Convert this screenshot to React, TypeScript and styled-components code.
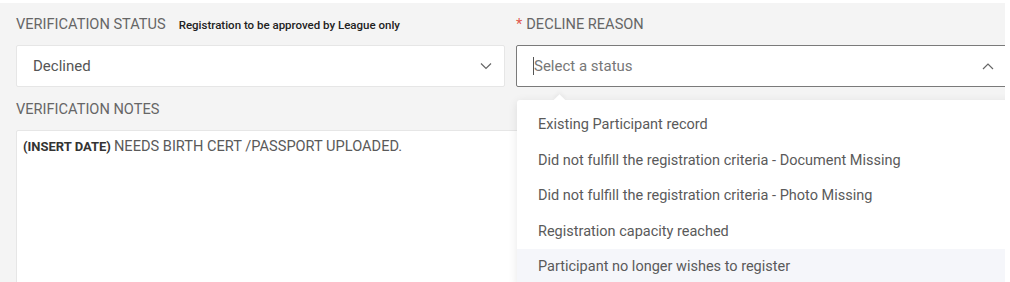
import styled, { createGlobalStyle } from "styled-components";

const GlobalStyle = createGlobalStyle`
  html, body {
    margin: 0;
    padding: 0;
    background: #ffffff;
    font-family: Roboto, "Liberation Sans", Arial, sans-serif;
  }
`

const Frame = styled.div`
  width: 1005px;
  height: 282px;
  padding-top: 3px;
  box-sizing: border-box;
  overflow: hidden;
`

const Panel = styled.div`
  position: relative;
  background: #f4f4f4;
  width: 1040px;
  height: 320px;
  padding: 0 0 0 16px;
  display: grid;
  grid-template-columns: 489px 491px;
  column-gap: 11px;
  grid-template-rows: 42px 42px 43px 1fr;
  align-items: center;
`

const Label = styled.div`
  display: flex;
  align-items: baseline;
  gap: 13px;
  font-size: 14.6px;
  color: #666666;
  text-transform: uppercase;
  white-space: nowrap;
`

const Hint = styled.span`
  font-size: 11.5px;
  font-weight: 500;
  color: #222222;
  text-transform: none;
`

const Required = styled.span`
  color: #e05a4f;
  margin-right: 4px;
`

const SelectBox = styled.div<{ $active?: boolean }>`
  position: relative;
  height: 42px;
  box-sizing: border-box;
  background: #ffffff;
  border: 1px solid ${p => (p.$active ? "#7a7a7a" : "#e6e6e6")};
  border-radius: 2px;
  display: flex;
  align-items: center;
  justify-content: space-between;
  padding: 0 12px 0 16px;
  font-size: 15px;
  color: ${p => (p.$active ? "#777777" : "#555555")};
`

const Caret = styled.span`
  display: inline-block;
  width: 1px;
  height: 18px;
  background: #555555;
`

const Value = styled.span`
  display: flex;
  align-items: center;
`

const Notes = styled.div`
  grid-column: 1 / span 2;
  align-self: stretch;
  background: #ffffff;
  border: 1px solid #e6e6e6;
  border-radius: 2px;
  padding: 6px 6px;
  font-size: 14.6px;
  color: #5a5a5a;
  white-space: nowrap;
`

const DateTag = styled.b`
  font-size: 13px;
  font-weight: 700;
  color: #333333;
  margin-right: 3px;
`

const Menu = styled.div`
  position: absolute;
  left: 517px;
  top: 97px;
  width: 500px;
  padding-top: 7px;
  background: #ffffff;
  border-radius: 3px;
  box-shadow: 0 2px 10px rgba(0, 0, 0, 0.1);
  &::before {
    content: "";
    position: absolute;
    top: -4px;
    left: 38px;
    width: 9px;
    height: 9px;
    background: #ffffff;
    transform: rotate(45deg);
    box-shadow: -2px -2px 4px rgba(0, 0, 0, 0.04);
  }
`

const Option = styled.div<{ $hover?: boolean }>`
  position: relative;
  height: 35.5px;
  display: flex;
  align-items: center;
  padding-left: 21px;
  font-size: 14.5px;
  color: #5a5a5a;
  background: ${p => (p.$hover ? "#f5f6fa" : "#ffffff")};
`

const Chevron = ({ up }: { up?: boolean }) => (
  <svg width="12" height="8" viewBox="0 0 12 8" fill="none">
    <path
      d={up ? "M1 7 L6 2 L11 7" : "M1 1.5 L6 6.5 L11 1.5"}
      stroke="#666666"
      strokeWidth="1.2"
    />
  </svg>
)

const reasons = [
  "Existing Participant record",
  "Did not fulfill the registration criteria - Document Missing",
  "Did not fulfill the registration criteria - Photo Missing",
  "Registration capacity reached",
  "Participant no longer wishes to register",
]

export default function App() {
  return (
    <Frame>
      <GlobalStyle />
      <Panel>
        <Label>
          Verification Status <Hint>Registration to be approved by League only</Hint>
        </Label>
        <Label>
          <span><Required>*</Required>Decline Reason</span>
        </Label>
        <SelectBox>
          <Value>Declined</Value>
          <Chevron />
        </SelectBox>
        <SelectBox $active>
          <Value><Caret />Select a status</Value>
          <Chevron up />
        </SelectBox>
        <Label>Verification Notes</Label>
        <span />
        <Notes>
          <DateTag>(INSERT DATE)</DateTag>NEEDS BIRTH CERT /PASSPORT UPLOADED.
        </Notes>
        <Menu>
          {reasons.map((r, i) => (
            <Option key={r} $hover={i === reasons.length - 1}>{r}</Option>
          ))}
        </Menu>
      </Panel>
    </Frame>
  );
}
